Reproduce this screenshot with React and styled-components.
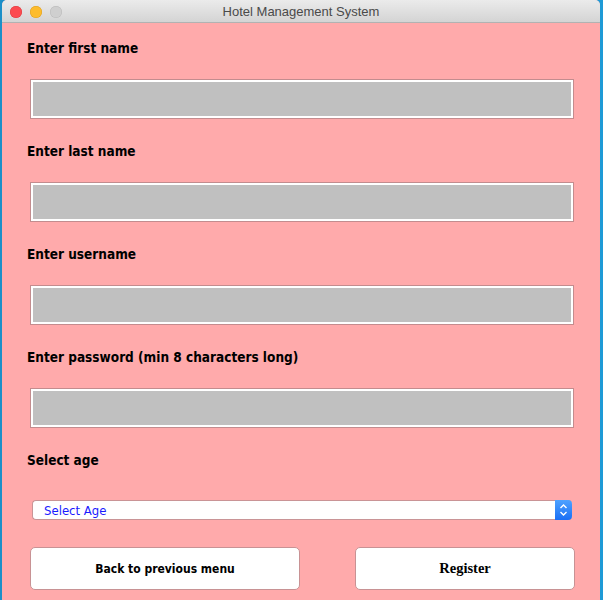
import React from "react";
import styled, { createGlobalStyle } from "styled-components";

const GlobalStyle = createGlobalStyle`
    html, body {
        margin: 0;
        padding: 0;
        background: linear-gradient(90deg, #1b8fc8 0%, #1e9ad6 100%);
        height: 600px;
        overflow: hidden;
    }
    #root {
        display: flex;
        padding-left: 2px;
    }
`;

const Window = styled.div`
    width: 598px;
    height: 600px;
    display: flex;
    flex-direction: column;
    background-color: #ffaaab;
    border-radius: 5px 5px 0 0;
    overflow: hidden;
`;

const TitleBar = styled.div`
    height: 22px;
    flex-shrink: 0;
    display: flex;
    align-items: center;
    position: relative;
    background: linear-gradient(#ebebeb, #d4d4d4);
    border-bottom: 1px solid #b2b2b2;
`;

const Lights = styled.div`
    display: flex;
    gap: 8px;
    padding-left: 8px;
    margin-top: 1px;
`;

const Light = styled.span`
    width: 12px;
    height: 12px;
    border-radius: 50%;
    background-color: ${(p) => p.color};
    box-shadow: inset 0 0 0 0.5px ${(p) => p.edge};
`;

const Title = styled.div`
    position: absolute;
    left: 0;
    right: 0;
    text-align: center;
    font-family: "Liberation Sans", Arial, sans-serif;
    font-size: 13px;
    color: #4a4a4a;
    pointer-events: none;
`;

const Content = styled.form`
    display: flex;
    flex-direction: column;
    padding: 17px 0 0 25px;
`;

const Label = styled.label`
    display: block;
    font-family: "DejaVu Sans Condensed", "DejaVu Sans", sans-serif;
    font-stretch: condensed;
    font-weight: bold;
    font-size: 13.5px;
    line-height: 16px;
    color: #000;
    margin-bottom: ${(p) => p.gap || 23}px;
`;

const Field = styled.input`
    box-sizing: border-box;
    width: 544px;
    height: 40px;
    margin: 0 0 24px 3px;
    border: 1px solid #c38c8e;
    box-shadow: inset 0 0 0 2px #ffffff;
    background-color: #c0c0c0;
    outline: none;
    padding: 0 8px;
    font-family: "DejaVu Sans", sans-serif;
    font-size: 13px;
`;

const SelectBox = styled.div`
    box-sizing: border-box;
    width: 540px;
    height: 20px;
    margin-left: 5px;
    display: flex;
    align-items: stretch;
    background-color: #ffffff;
    border: 1px solid #c99496;
    border-right: none;
    border-radius: 4px;
`;

const SelectText = styled.div`
    flex: 1;
    display: flex;
    align-items: center;
    padding-left: 11px;
    font-family: "DejaVu Sans Condensed", "DejaVu Sans", sans-serif;
    font-stretch: condensed;
    font-size: 13px;
    color: #1a1aff;
`;

const Stepper = styled.div`
    width: 17px;
    margin: -1px 0;
    display: flex;
    align-items: center;
    justify-content: center;
    border-radius: 0 4px 4px 0;
    background: linear-gradient(#4ea2ff, #1a6ff5);
`;

const ButtonRow = styled.div`
    display: flex;
    gap: 55px;
    margin: 27px 0 0 3px;
`;

const Button = styled.button`
    box-sizing: border-box;
    width: ${(p) => p.w}px;
    height: 43px;
    background-color: #ffffff;
    border: 1px solid #c89294;
    border-radius: 5px;
    cursor: pointer;
    font-family: ${(p) =>
        p.serif
            ? `"Liberation Serif", "Times New Roman", serif`
            : `"DejaVu Sans Condensed", "DejaVu Sans", sans-serif`};
    font-stretch: condensed;
    font-weight: bold;
    font-size: ${(p) => (p.serif ? 14.5 : 12)}px;
    color: #000;
`;

const fields = [
    { name: "first_name", label: "Enter first name" },
    { name: "last_name", label: "Enter last name" },
    { name: "username", label: "Enter username" },
    { name: "password", label: "Enter password (min 8 characters long)", type: "password" },
];

const App = () => {
    return (
        <>
            <GlobalStyle />
            <Window>
                <TitleBar>
                    <Lights>
                        <Light color="#fc4b50" edge="#de3a3f" />
                        <Light color="#fdbc2c" edge="#dd9e1f" />
                        <Light color="#cfcfcf" edge="#b9b9b9" />
                    </Lights>
                    <Title>Hotel Management System</Title>
                </TitleBar>
                <Content onSubmit={(e) => e.preventDefault()}>
                    {fields.map((f) => (
                        <React.Fragment key={f.name}>
                            <Label htmlFor={f.name}>{f.label}</Label>
                            <Field id={f.name} name={f.name} type={f.type || "text"} />
                        </React.Fragment>
                    ))}
                    <Label gap={32}>Select age</Label>
                    <SelectBox>
                        <SelectText>Select Age</SelectText>
                        <Stepper>
                            <svg width="9" height="14" viewBox="0 0 9 14" fill="none">
                                <path d="M1.5 5 L4.5 2 L7.5 5" stroke="#fff" strokeWidth="1.4" />
                                <path d="M1.5 9 L4.5 12 L7.5 9" stroke="#fff" strokeWidth="1.4" />
                            </svg>
                        </Stepper>
                    </SelectBox>
                    <ButtonRow>
                        <Button type="button" w={270}>Back to previous menu</Button>
                        <Button type="submit" w={220} serif>Register</Button>
                    </ButtonRow>
                </Content>
            </Window>
        </>
    );
};

export default App;
